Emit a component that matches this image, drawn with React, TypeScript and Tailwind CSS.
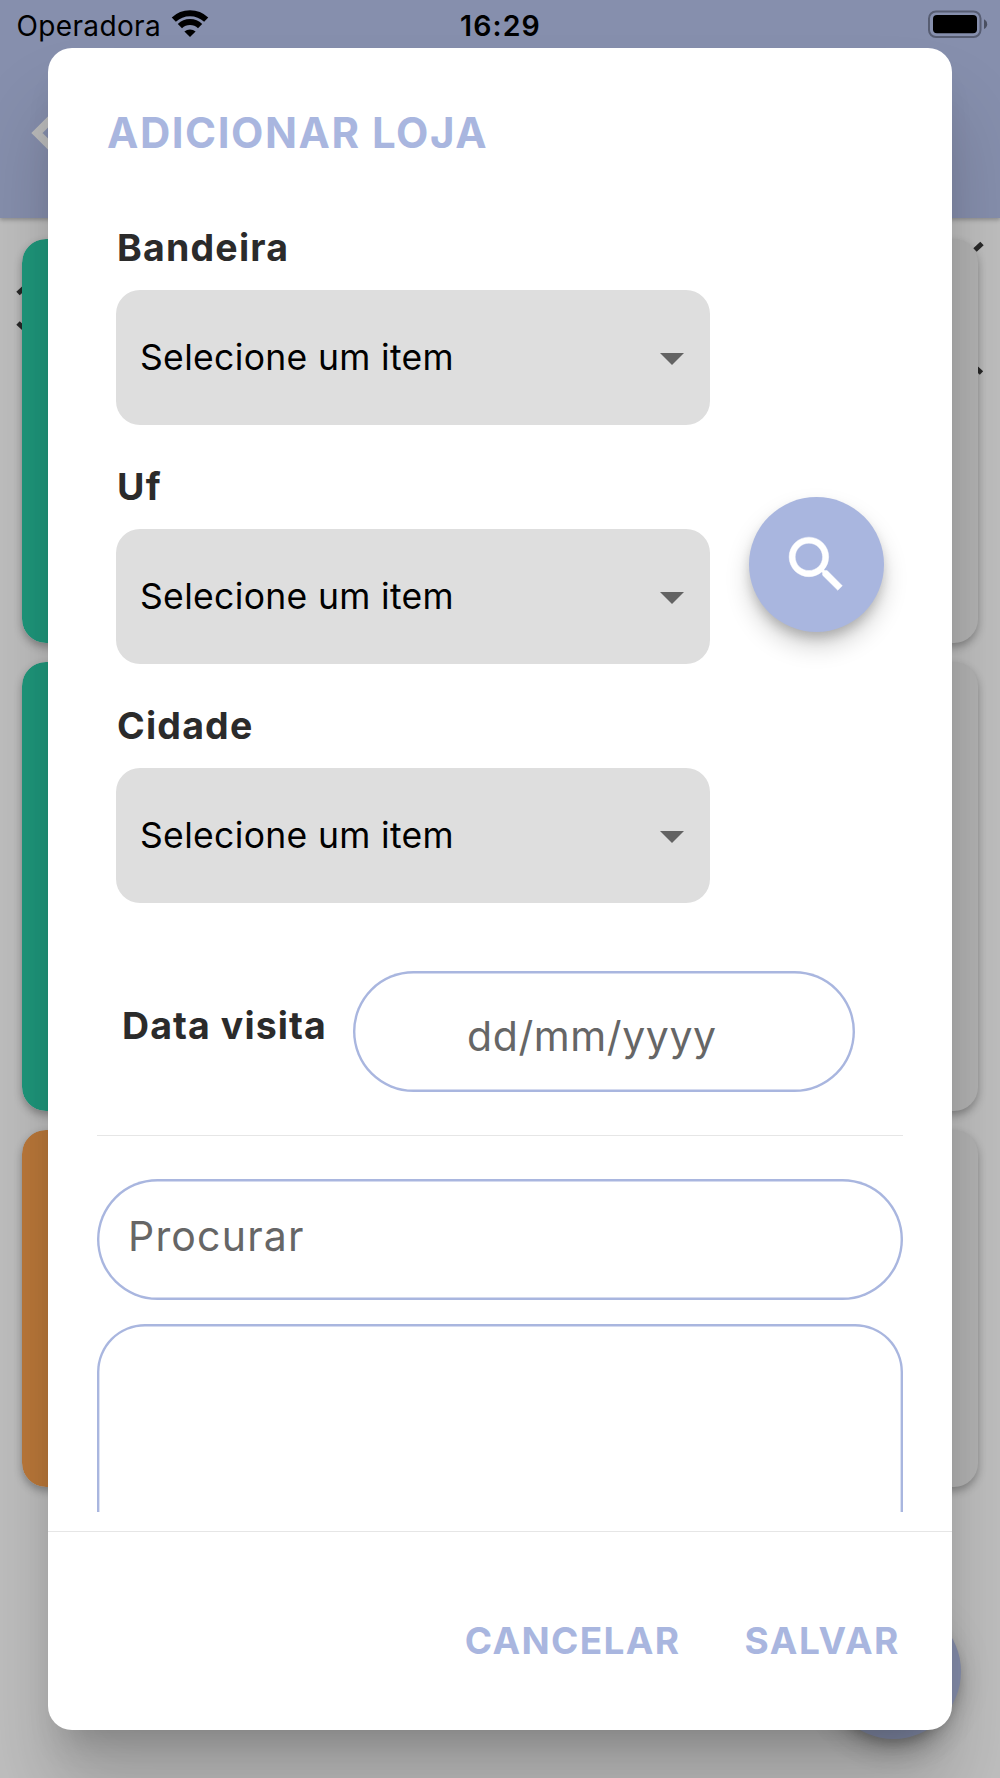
import React from "react";

function WifiIcon() {
  return (
    <svg className="ml-[10px] mt-[10px] h-[27px] w-[38px]" viewBox="0 0 38 27" fill="none" stroke="#000">
      <path d="M2.8 10.6 A 23.6 23.6 0 0 1 35.2 10.6" strokeWidth="6" transform="translate(0 -1)" />
      <path d="M8.9 17.2 A 14.4 14.4 0 0 1 29.1 17.2" strokeWidth="6" transform="translate(0 -1)" />
      <path d="M19 27 L13.4 21.6 A 8.4 8.4 0 0 1 24.6 21.6 Z" fill="#000" stroke="none" />
    </svg>
  );
}

function BatteryIcon() {
  return (
    <svg className="ml-auto mr-[12px] mt-[10px] h-[29px] w-[60px]" viewBox="0 0 60 29">
      <rect x="1" y="1.5" width="51.5" height="25.5" rx="7" fill="none" stroke="#575d72" strokeWidth="2" />
      <rect x="5" y="5" width="44" height="18.3" rx="4" fill="#000" />
      <path d="M56 9.3 C58 10.5 59.2 12 59.2 14.2 C59.2 16.4 58 18 56 19.1 Z" fill="#4a4f61" />
    </svg>
  );
}

function StatusBar() {
  return (
    <div className="relative flex h-12 items-start pl-[16.5px] text-[28px] leading-[32px] text-black">
      <span className="mt-[10px] tracking-[0.36px]">Operadora</span>
      <WifiIcon />
      <span className="absolute left-[460px] top-[10px] text-[28.5px] font-semibold tracking-[1.1px]">16:29</span>
      <BatteryIcon />
    </div>
  );
}

function Backdrop() {
  return (
    <div className="h-full w-full bg-[#bfbfbf]">
      <header className="relative h-[218px] bg-[#868fad] shadow-[0_2px_4px_rgba(0,0,0,0.25)]">
        <StatusBar />
        <svg className="absolute left-[31px] top-[105px] h-14 w-10" viewBox="0 0 40 56" fill="none" stroke="#bcbcbc" strokeWidth="8">
          <path d="M30 4 L6 28 L30 52" />
        </svg>
      </header>
      <div className="relative">
        <svg className="absolute left-0 top-0 h-[180px] w-full" viewBox="0 218 1000 180" stroke="#2a2a2a" strokeWidth="5" fill="none">
          <path d="M18 293.5 L24 288 M18 323 L24 328.5 M975 250 L982 243.5 M976 368 L981.5 373" />
        </svg>
        <div className="relative flex flex-col gap-[19px] px-[22px] pt-[21px]">
          <Card height="h-[404px]" accent="bg-[#1f987c]" />
          <Card height="h-[449px]" accent="bg-[#1f987c]" />
          <Card height="h-[357px]" accent="bg-[#bc793a]" />
        </div>
      </div>
      <div className="absolute left-[826px] top-[1604px] size-[135px] rounded-full bg-[#868fad] shadow-[0_7px_12px_-2px_rgba(0,0,0,0.2),0_14px_24px_rgba(0,0,0,0.14),0_2px_43px_rgba(0,0,0,0.06)]" />
    </div>
  );
}

function Card({ height, accent }: { height: string; accent: string }) {
  return (
    <div className={`${height} flex overflow-clip rounded-[24px] bg-[#b3b3b3] shadow-[0_4px_8px_rgba(0,0,0,0.3)]`}>
      <div className={`${accent} w-16 rounded-l-[24px]`} />
    </div>
  );
}

function Field({ label }: { label: string }) {
  return (
    <div>
      <div className="h-[104px] pl-px pt-[40px] text-[37.5px] font-bold leading-[44px] tracking-[1.2px] text-[#2b2b2b]">
        {label}
      </div>
      <div className="flex h-[135px] w-[594px] items-center justify-between rounded-[24px] bg-[#dedede] pl-[24px] pr-[26.5px]">
        <span className="mt-px text-[35.5px] leading-[44px] tracking-[0.33px] text-black">Selecione um item</span>
        <svg className="mt-[2px] h-3 w-6" viewBox="0 0 24 12">
          <path d="M0 0 H24 L12 12 Z" fill="#636363" />
        </svg>
      </div>
    </div>
  );
}

function Dialog() {
  return (
    <div className="absolute inset-x-[48px] top-[48px] flex h-[1682px] flex-col rounded-[24px] bg-white shadow-[0_26px_36px_-17px_rgba(0,0,0,0.2),0_66px_80px_2px_rgba(0,0,0,0.17)]">
      <h1 className="h-[138px] pl-[59px] pt-[61px] text-[42px] font-bold leading-[48px] tracking-[1.54px] text-[#a9b6df]">
        ADICIONAR LOJA
      </h1>
      <div className="flex h-[1326px] flex-col overflow-hidden px-[49px]">
        <div className="flex items-center gap-[39px] pl-[19px]">
          <div>
            <Field label="Bandeira" />
            <Field label="Uf" />
            <Field label="Cidade" />
          </div>
          <button className="mt-[39px] flex size-[135px] items-center justify-center rounded-full bg-[#a9b6df] shadow-[0_7px_12px_-2px_rgba(0,0,0,0.2),0_14px_24px_rgba(0,0,0,0.18)]">
            <svg className="size-[73px]" viewBox="0 0 24 24" fill="#fff">
              <path d="M15.5 14h-.79l-.28-.27A6.471 6.471 0 0 0 16 9.5 6.5 6.5 0 1 0 9.5 16c1.61 0 3.09-.59 4.23-1.57l.27.28v.79l5 4.99L20.49 19l-4.99-5zm-6 0C7.01 14 5 11.99 5 9.5S7.01 5 9.5 5 14 7.01 14 9.5 11.99 14 9.5 14z" stroke="#fff" strokeWidth="0.15" />
            </svg>
          </button>
        </div>
        <div className="mt-[68px] flex shrink-0 pl-6">
          <span className="mt-[33px] w-[232px] whitespace-nowrap pl-px text-[37.5px] font-bold leading-[44px] tracking-[1.08px] text-[#2b2b2b]">
            Data visita
          </span>
          <div className="h-[121px] w-[502px] rounded-full pl-[114px] pt-[41px] text-[41px] leading-[48px] tracking-[0.59px] text-[#666] shadow-[inset_0_0_0_2.4px_#a9b6df]">
            dd/mm/yyyy
          </div>
        </div>
        <div className="mt-[43px] h-px shrink-0 bg-[#e6e6e6]" />
        <div className="mt-[43px] h-[121px] shrink-0 rounded-full pl-[31px] pt-[33px] text-[41px] leading-[48px] tracking-[1.19px] text-[#666] shadow-[inset_0_0_0_2.4px_#a9b6df]">
          Procurar
        </div>
        <div className="mt-6 h-[400px] shrink-0 rounded-[48px] shadow-[inset_0_0_0_2.4px_#a9b6df]" />
      </div>
      <div className="mt-[19px] flex flex-1 items-start justify-end gap-[64px] border-t border-[#e6e6e6] pr-[52px] pt-[87px] text-[37px] font-bold leading-[44px] text-[#a9b6df]">
        <button className="tracking-[1.35px]">CANCELAR</button>
        <button className="tracking-[1.6px]">SALVAR</button>
      </div>
    </div>
  );
}

export default function App() {
  return (
    <div className="relative h-[1778px] w-[1000px] overflow-hidden font-['Inter','Liberation_Sans',sans-serif]">
      <Backdrop />
      <Dialog />
    </div>
  );
}
